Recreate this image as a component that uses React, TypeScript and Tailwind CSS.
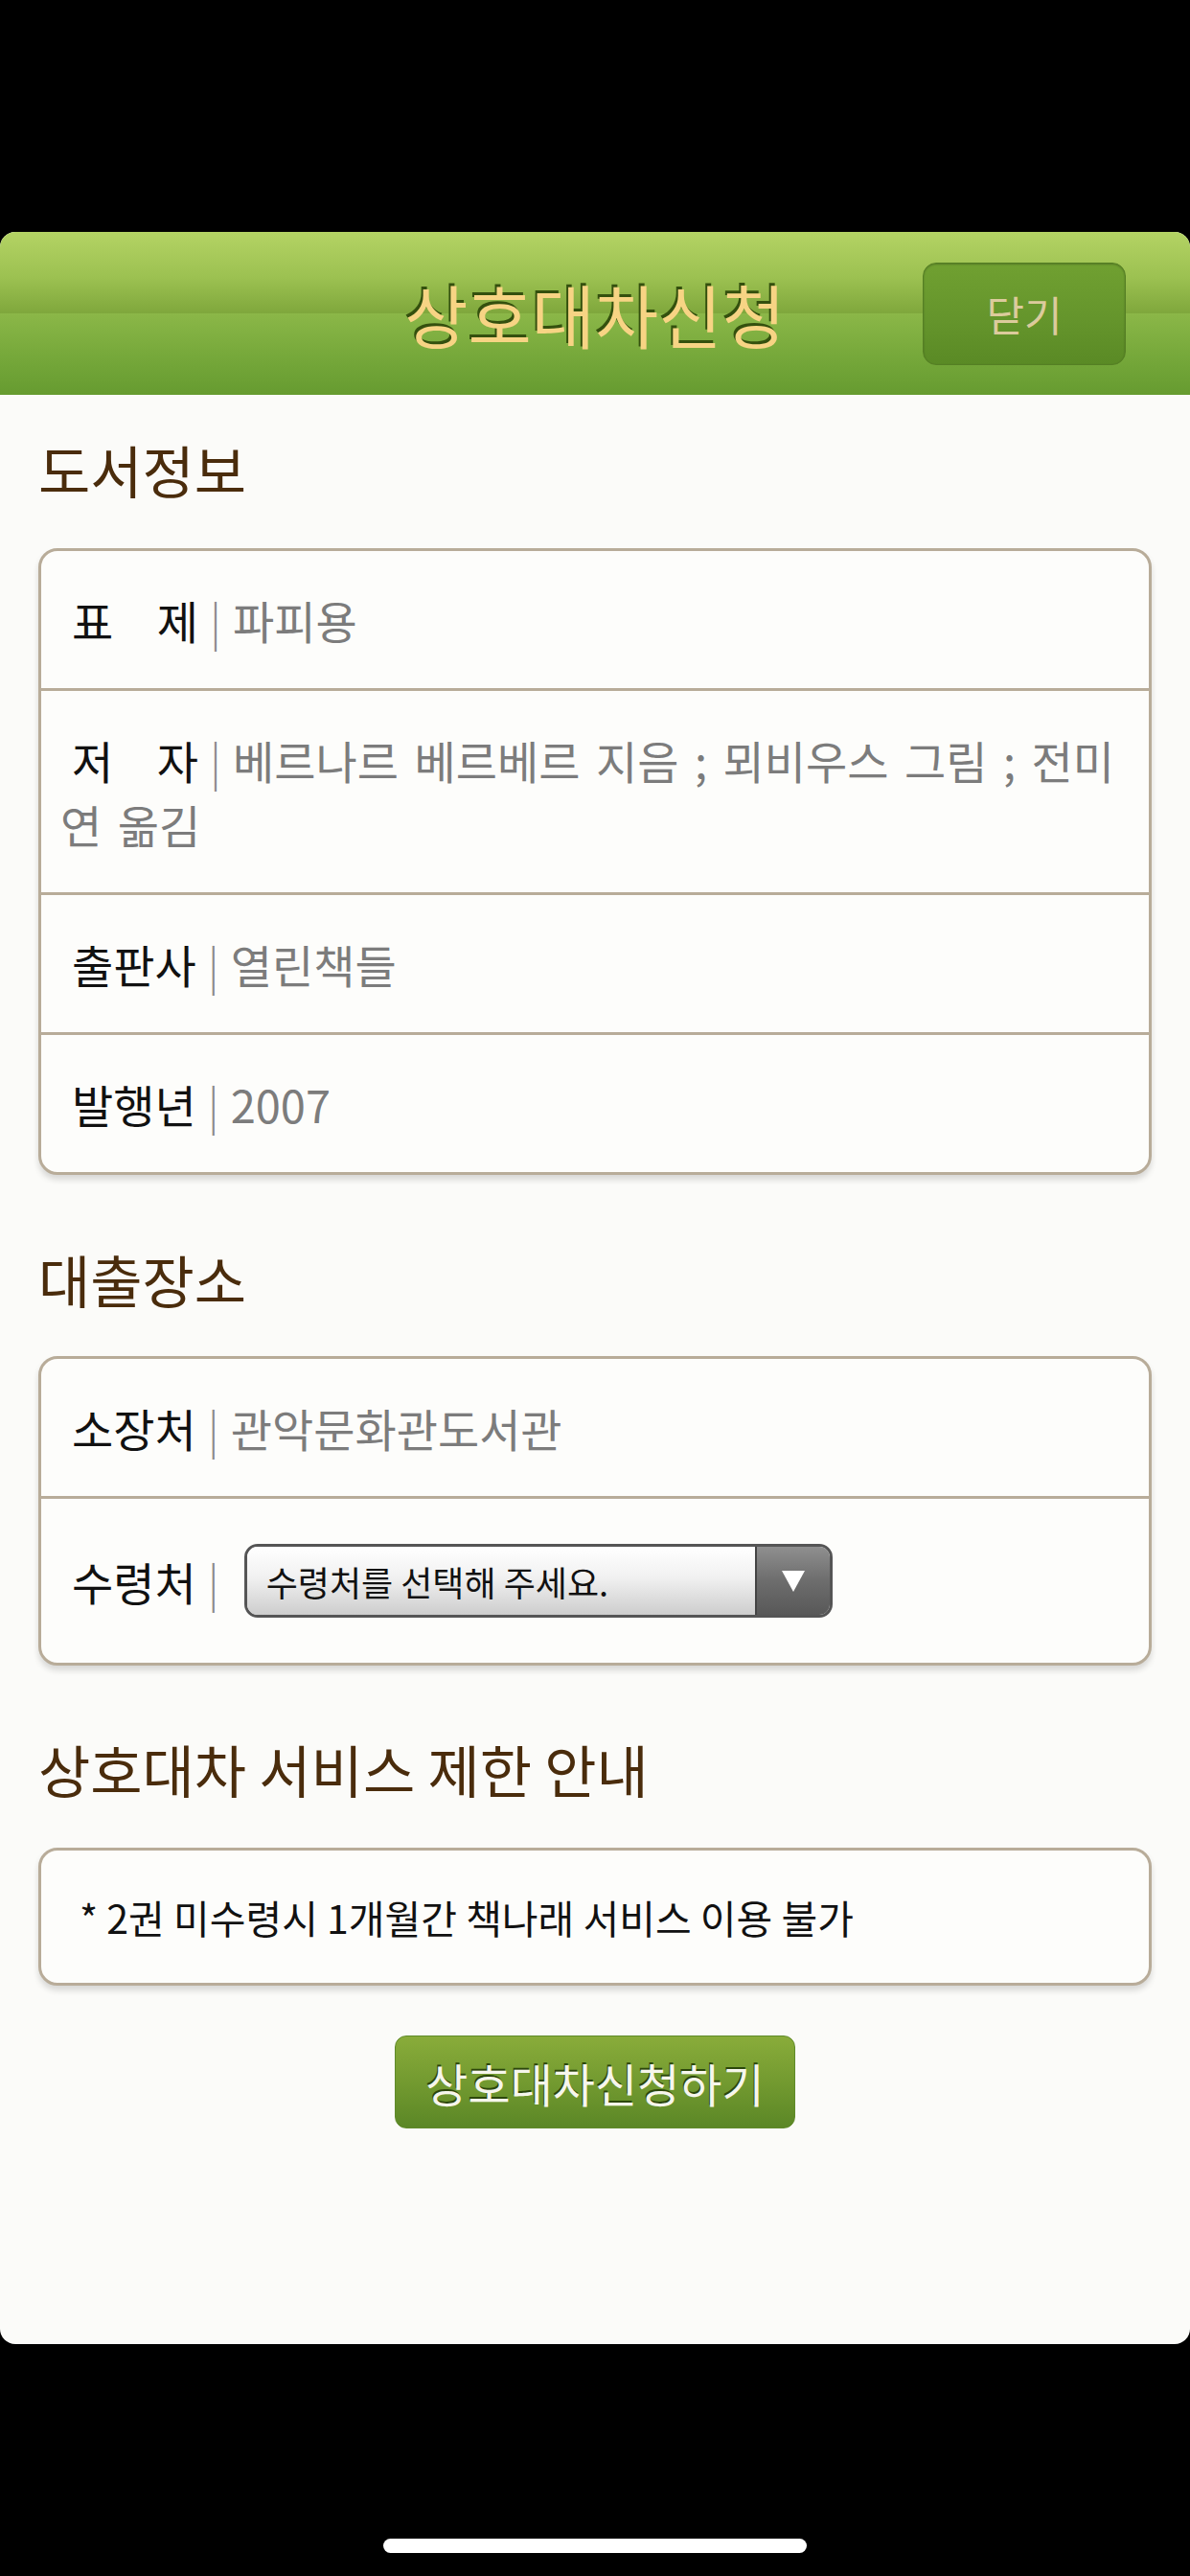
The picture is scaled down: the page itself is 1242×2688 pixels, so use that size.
import React from 'react';

// Book info rows
const bookRows = [
	{ label: ['표', '제'], value: '파피용' },
	{ label: ['저', '자'], value: '베르나르 베르베르 지음 ; 뫼비우스 그림 ; 전미', rest: '연 옮김' },
	{ label: ['출판사'], value: '열린책들' },
	{ label: ['발행년'], value: '2007' }
];

function Label({ parts }: { parts: string[] }) {
	if (parts.length > 1) {
		return (
			<span className="ml-[12px] inline-flex w-[132px] justify-between text-[#111]">
				{parts.map((p, i) => (
					<span key={i}>{p}</span>
				))}
			</span>
		);
	}
	return <span className="ml-[12px] text-[#111]">{parts[0]}</span>;
}

function Separator() {
	return <span className="mx-[12px] text-[#8a8a8a] font-light">|</span>;
}

function SectionTitle({ children, className }: { children: React.ReactNode; className: string }) {
	return (
		<h2 className={`text-[59px] leading-[64px] text-[#4a2c0c] ${className}`}>{children}</h2>
	);
}

function Card({ children, className = '' }: { children: React.ReactNode; className?: string }) {
	return (
		<div
			className={`rounded-[20px] border-[3px] border-[#b8ac99] bg-[#fdfdfb] shadow-[0_5px_6px_rgba(0,0,0,0.14)] ${className}`}
		>
			{children}
		</div>
	);
}

function SelectBox() {
	return (
		<div className="flex h-[77px] w-[614px] overflow-hidden rounded-[14px] border-[3px] border-[#555]">
			<div className="flex flex-1 items-center bg-[linear-gradient(180deg,#ffffff_0%,#f1f1f1_45%,#cdcdcd_100%)] pl-[20px] text-[36px] leading-none text-[#111]">
				수령처를 선택해 주세요.
			</div>
			<div className="flex w-[78px] items-center justify-center border-l-2 border-[#444] bg-[linear-gradient(180deg,#8f8f8f_0%,#6d6d6d_50%,#585858_100%)]">
				<svg width="28" height="26" viewBox="0 0 28 26">
					<polygon points="2,2 26,2 14,24" fill="#ffffff" />
				</svg>
			</div>
		</div>
	);
}

export default function App() {
	return (
		<div className="min-h-screen bg-black pt-[242px] font-['Noto_Sans_CJK_KR','Noto_Sans',sans-serif]">
			<div className="flex h-[2204px] flex-col rounded-[16px] bg-[#fbfbf9]">
				{/* Header */}
				<div className="grid h-[170px] grid-cols-[1fr_auto_1fr] items-center rounded-t-[16px] bg-[linear-gradient(180deg,#b4d364_0%,#9cc151_28%,#7fa73c_50%,#8bb748_50%,#77a93b_75%,#669b30_100%)]">
					<div />
					<h1 className="text-[72px] leading-none text-[#f7d484] [text-shadow:-2px_-3px_0_#34500e]">
						상호대차신청
					</h1>
					<div className="flex justify-end pr-[67px]">
						<button className="h-[107px] w-[212px] rounded-[14px] border border-[#557f24] bg-[linear-gradient(180deg,#70a031_0%,#65952c_55%,#5a8a25_100%)] text-[43px] text-[#dccb9c] shadow-[inset_0_1px_2px_rgba(0,0,0,0.25)]">
							닫기
						</button>
					</div>
				</div>

				<div className="px-[40px]">
					<SectionTitle className="mt-[46px]">도서정보</SectionTitle>
					<Card className="mt-[50px]">
						{bookRows.map((row, i) => (
							<div
								key={i}
								className={`py-[38px] pl-[20px] pr-[12px] text-[47px] leading-[67px] ${i > 0 ? 'border-t-[3px] border-[#b8ac99]' : ''}`}
							>
								<Label parts={row.label} />
								<Separator />
								<span className="text-[#7c7c7c] [word-spacing:6px]">{row.value}</span>
								{row.rest && (
									<>
										<br />
										<span className="text-[#7c7c7c] [word-spacing:6px]">{row.rest}</span>
									</>
								)}
							</div>
						))}
					</Card>

					<SectionTitle className="mt-[77px]">대출장소</SectionTitle>
					<Card className="mt-[48px]">
						<div className="py-[38px] pl-[20px] text-[47px] leading-[67px]">
							<Label parts={['소장처']} />
							<Separator />
							<span className="text-[#7c7c7c]">관악문화관도서관</span>
						</div>
						<div className="flex items-center border-t-[3px] border-[#b8ac99] py-[47px] pl-[20px] text-[47px] leading-[67px]">
							<Label parts={['수령처']} />
							<span className="ml-[12px] mr-[26px] text-[#8a8a8a] font-light">|</span>
							<SelectBox />
						</div>
					</Card>

					<SectionTitle className="mt-[76px]">상호대차 서비스 제한 안내</SectionTitle>
					<Card className="mt-[50px]">
						<div className="py-[39px] pl-[40px] text-[41px] leading-[60px] text-[#111]">
							* 2권 미수령시 1개월간 책나래 서비스 이용 불가
						</div>
					</Card>

					<div className="mt-[52px] flex justify-center">
						<button className="h-[97px] w-[418px] rounded-[12px] border border-[#5f8a2a] bg-[linear-gradient(180deg,#89ac3a_0%,#739a30_50%,#5b8726_100%)] text-[48px] text-[#f6f6ec] [text-shadow:-1px_-2px_0_#2c470b]">
							상호대차신청하기
						</button>
					</div>
				</div>
			</div>

			<div className="mx-auto mt-[203px] h-[15px] w-[442px] rounded-full bg-white" />
		</div>
	);
}
